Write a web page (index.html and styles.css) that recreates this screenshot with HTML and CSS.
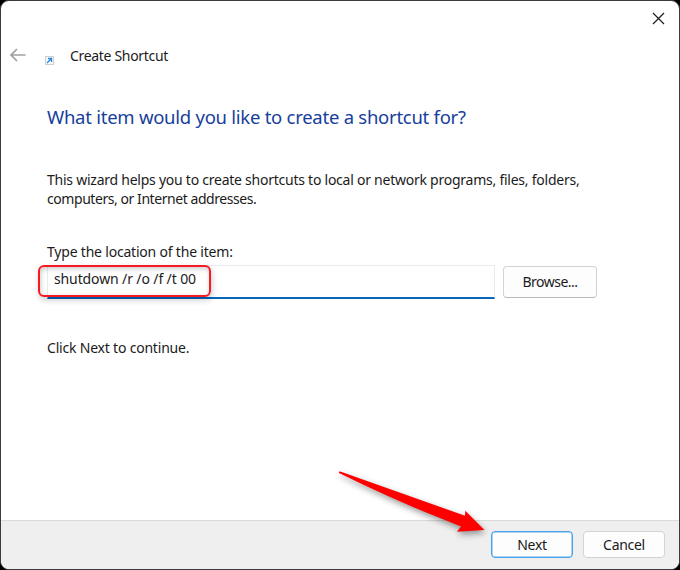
FILE: index.html
```html
<!DOCTYPE html>
<html lang="en">
<head>
<meta charset="utf-8">
<title>Create Shortcut</title>
<link rel="stylesheet" href="styles.css">
</head>
<body>
<div class="window">
  <div class="titlebar">
    <svg class="close" width="13" height="13" viewBox="0 0 13 13"><path d="M1 1L12 12M12 1L1 12"/></svg>
  </div>
  <header class="header">
    <svg class="back" width="16" height="14" viewBox="0 0 16 14"><path d="M15.500 7H1.200M7 1L1 7L7 13"/></svg>
    <svg class="shortcut" width="9" height="9" viewBox="0 0 9 9"><rect x=".5" y=".5" width="8" height="8"/><path d="M2 7L6 3M3 2.500H6.500V6"/></svg>
    <span class="caption">Create Shortcut</span>
  </header>
  <main class="content">
    <h1 class="heading">What item would you like to create a shortcut for?</h1>
    <p class="intro">This wizard helps you to create shortcuts to local or network programs, files, folders,<br><span class="intro-end">computers, or Internet addresses.</span></p>
    <label class="label">Type the location of the item:</label>
    <div class="field-row">
      <div class="field">
        <span class="value">shutdown /r /o /f /t 00</span>
        <div class="highlight"></div>
      </div>
      <button class="button browse">Browse...</button>
    </div>
    <p class="hint">Click Next to continue.</p>
  </main>
  <footer class="footer">
    <button class="button next">Next</button>
    <button class="button cancel">Cancel</button>
  </footer>
  <svg class="arrow" width="180" height="100" viewBox="320 455 180 100"><path d="M339 471.500L341 471.800L465 515.700L465.300 510.700L484.500 530L457 531.800L461 526.500Q400 503 339 473Z"/></svg>
</div>
</body>
</html>
```
FILE: styles.css
```css
* { box-sizing: border-box; }
body { margin: 0; background: #000; font: 14px/19px "Noto Sans", "Open Sans", sans-serif; color: #1b1b1b; }
p, h1 { margin: 0; font-weight: 400; white-space: nowrap; }
svg { display: block; fill: none; }
.window { position: relative; width: 680px; height: 570px; display: flex; flex-direction: column; background: #fff; border: 1px solid #3b3b3d; border-radius: 9px; overflow: hidden; }
.titlebar { height: 35px; display: flex; justify-content: flex-end; padding: 11px 14px 0 0; }
.close { stroke: #222; stroke-width: 1.3; }
.header { height: 40px; display: flex; align-items: center; padding-left: 9px; }
.back { stroke: #a0a0a0; stroke-width: 1.7; margin-top: -2px; }
.shortcut { margin: 9px 0 0 19px; stroke: #2588dc; stroke-width: 1.3; }
.shortcut rect { stroke: #cbd0d5; stroke-width: 1; fill: #fafafa; }
.caption { margin: -1px 0 0 16px; letter-spacing: -.32px; }
.content { flex: 1; padding: 28px 0 0 46px; }
.heading { font-size: 18.5px; line-height: 26px; color: #173e9c; letter-spacing: -.26px; }
.intro { margin-top: 40px; letter-spacing: -.245px; }
.intro-end { letter-spacing: -.44px; }
.label { display: block; margin-top: 34px; letter-spacing: -.2px; }
.field-row { display: flex; margin-top: 4px; }
.field { position: relative; width: 448px; height: 34px; border: 1px solid #e8ebed; border-bottom: 2px solid #0766bd; padding: 3px 0 0 6px; letter-spacing: -.12px; }
.highlight { position: absolute; left: -10px; top: -1px; width: 173px; height: 32px; border: 2px solid #f81a22; border-radius: 6px; box-shadow: 1px 3px 6px #0003, inset 1px 2px 5px #0003; }
.button { font: inherit; color: inherit; background: #fdfdfd; border: 1px solid #d3d3d3; border-radius: 4px; padding: 0; letter-spacing: -.3px; }
.browse { width: 94px; height: 32px; margin: 1px 0 0 8px; border-bottom-color: #b9b9b9; letter-spacing: -.5px; padding-bottom: 1px; }
.hint { margin-top: 39px; letter-spacing: -.2px; }
.footer { height: 49px; display: flex; justify-content: flex-end; gap: 10px; padding: 10px 14px 0 0; background: #efefef; border-top: 1px solid #dadada; }
.next, .cancel { width: 82px; height: 27px; }
.next { border: 1px solid #4ba3e7; box-shadow: inset 0 0 0 .5px #5ba9e8; }
.arrow { position: absolute; left: 319px; top: 454px; fill: #fe0000; filter: drop-shadow(1px 3px 3px #0006); }
```
